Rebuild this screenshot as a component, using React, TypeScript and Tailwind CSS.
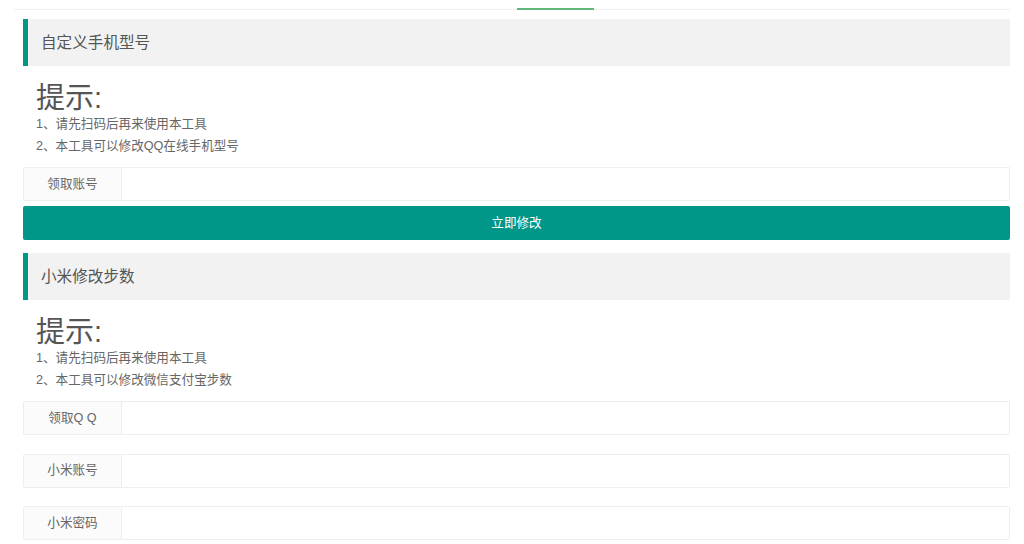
import React from 'react'

const font = { fontFamily: '"Liberation Sans", "Noto Sans CJK SC", sans-serif' }

function Quote({ title }: { title: string }) {
  return (
    <div className="h-[47px] flex items-center border-l-[5px] border-[#009688] bg-[#f2f2f2] pl-[13px] text-[15.6px] text-[#555]">
      {title}
    </div>
  )
}

function Tips({ lines }: { lines: string[] }) {
  return (
    <div className="mt-[16px] pl-[13px]">
      <div className="text-[29px] leading-[32px] text-[#555]">提示:</div>
      {lines.map(l => (
        <div key={l} className="text-[12.6px] leading-[21.6px] text-[#666]">{l}</div>
      ))}
    </div>
  )
}

function Field({ label, className = '' }: { label: string, className?: string }) {
  return (
    <div className={`h-[34px] flex ${className}`}>
      <div className="w-[99px] shrink-0 flex items-center justify-center border border-[#eeeeee] rounded-l-[2px] bg-[#fbfbfb] text-[12.6px] text-[#666]">
        {label}
      </div>
      <input className="flex-1 min-w-0 border border-l-0 border-[#eeeeee] rounded-r-[2px] bg-white outline-none px-3 text-[12.6px]" />
    </div>
  )
}

export default function App() {
  return (
    <div className="w-[1024px] h-[544px] overflow-hidden bg-white" style={font}>
      <div className="mx-[14px] h-[10px] border-b border-[#f0f0f0] flex items-end">
        <div className="ml-[503px] w-[77px] h-[2px] bg-[#5FB878] -mb-px" />
      </div>

      <div className="pl-[23px] pr-[14px]">
        <div className="mt-[9px]">
          <Quote title="自定义手机型号" />
          <Tips lines={['1、请先扫码后再来使用本工具', '2、本工具可以修改QQ在线手机型号']} />
          <Field label="领取账号" className="mt-[10px]" />
          <button className="mt-[5px] w-full h-[34px] rounded-[2px] bg-[#009688] text-white text-[12.6px]">
            立即修改
          </button>
        </div>

        <div className="mt-[13px]">
          <Quote title="小米修改步数" />
          <Tips lines={['1、请先扫码后再来使用本工具', '2、本工具可以修改微信支付宝步数']} />
          <div className="mt-[10px] flex flex-col gap-[18.5px]">
            <Field label="领取Q Q" />
            <Field label="小米账号" />
            <Field label="小米密码" />
          </div>
        </div>
      </div>
    </div>
  )
}
